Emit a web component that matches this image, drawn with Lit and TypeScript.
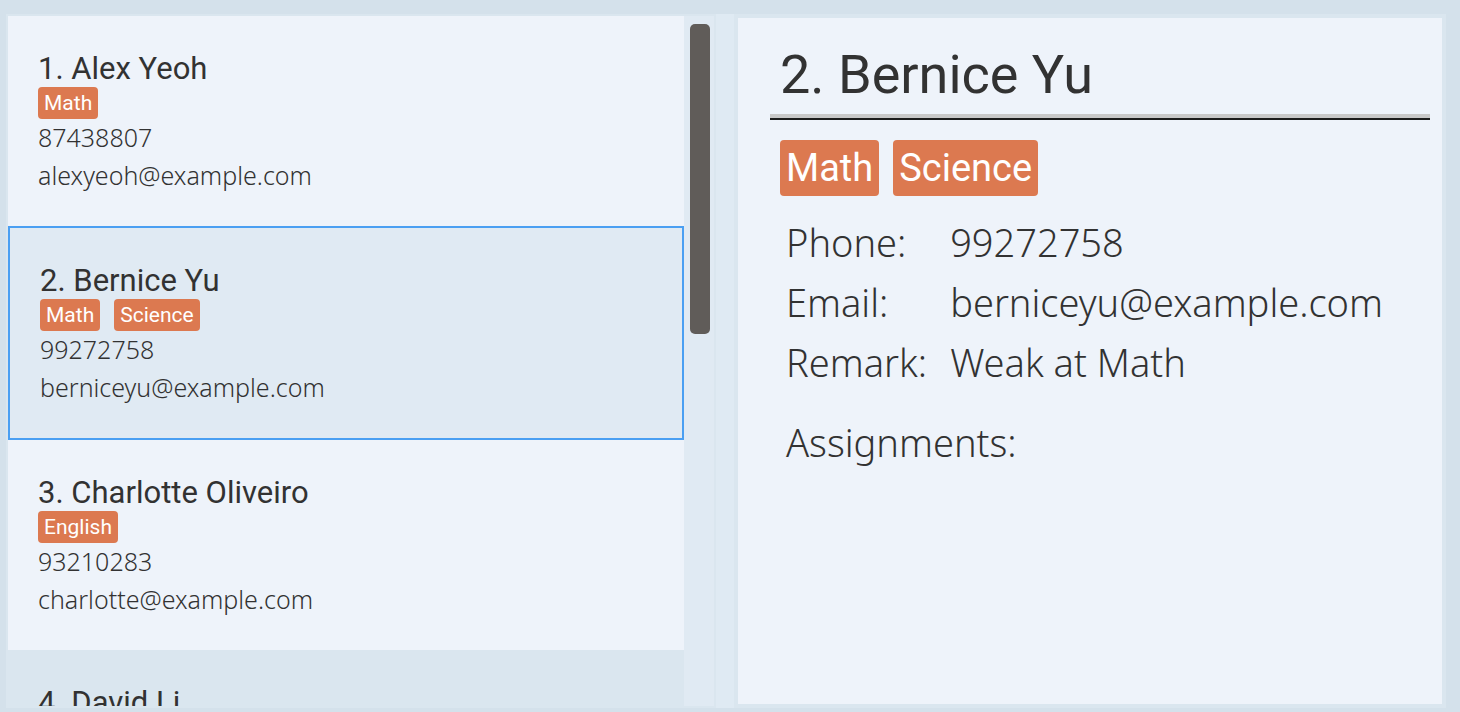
import { LitElement, html, css } from "lit";
import { customElement, property, state } from "lit/decorators.js";

interface Person {
  name: string;
  tags: string[];
  phone: string;
  email: string;
  remark: string;
}

const PEOPLE: Person[] = [
  { name: "Alex Yeoh", tags: ["Math"], phone: "87438807", email: "alexyeoh@example.com", remark: "" },
  { name: "Bernice Yu", tags: ["Math", "Science"], phone: "99272758", email: "berniceyu@example.com", remark: "Weak at Math" },
  { name: "Charlotte Oliveiro", tags: ["English"], phone: "93210283", email: "charlotte@example.com", remark: "" },
  { name: "David Li", tags: [], phone: "", email: "", remark: "" },
];

@customElement("tag-row")
export class TagRow extends LitElement {
  @property({ attribute: false }) tags: string[] = [];
  @property({ type: Boolean, reflect: true }) large = false;

  static styles = css`
    :host {
      display: flex;
      flex-wrap: wrap;
      gap: 14px;
    }
    .tag {
      padding: 0 6px;
      border-radius: 4px;
      background: #dc7950;
      color: #fff;
      font: 400 21px/32px Roboto, "Liberation Sans", sans-serif;
    }
    :host([large]) .tag {
      font-size: 38px;
      line-height: 56px;
    }
  `;

  render() {
    return this.tags.map((tag) => html`<span class="tag">${tag}</span>`);
  }
}

@customElement("person-list")
export class PersonList extends LitElement {
  @property({ attribute: false }) people: Person[] = [];
  @property({ type: Number }) selected = 0;

  static styles = css`
    :host {
      display: flex;
      min-width: 0;
      min-height: 0;
      border: 2px solid #dae6ef;
      background: #e0eaf3;
    }
    .rows {
      flex: 1;
      min-width: 0;
      margin: 0;
      padding: 0;
      list-style: none;
      overflow: hidden;
      color: #323232;
    }
    .row {
      padding: 34px 30px 32px;
      background: #eef3fa;
      cursor: default;
    }
    .row:nth-child(even) {
      background: #dae6ef;
    }
    .row.selected {
      border: 2px solid #4a9ff2;
      background: #e0eaf3;
    }
    .name {
      font: 400 31px/37px Roboto, "Liberation Sans", sans-serif;
      white-space: nowrap;
    }
    .lines {
      margin-top: -1px;
    }
    .line {
      font: 300 25px/38px "Noto Sans", "Open Sans", sans-serif;
    }
    .track {
      padding: 8px 4px 8px 6px;
    }
    .thumb {
      width: 20px;
      height: 46%;
      border-radius: 5px;
      background: #605c59;
    }
  `;

  private pick(index: number) {
    this.dispatchEvent(new CustomEvent("pick", { detail: index }));
  }

  render() {
    return html`
      <ul class="rows" role="listbox" aria-label="People">
        ${this.people.map(
          (p, i) => html`
            <li
              class=${i === this.selected ? "row selected" : "row"}
              role="option"
              aria-selected=${i === this.selected ? "true" : "false"}
              @click=${() => this.pick(i)}
            >
              <div class="name">${i + 1}. ${p.name}</div>
              <tag-row .tags=${p.tags}></tag-row>
              <div class="lines">
                <div class="line">${p.phone}</div>
                <div class="line">${p.email}</div>
              </div>
            </li>
          `
        )}
      </ul>
      <div class="track"><div class="thumb"></div></div>
    `;
  }
}

@customElement("person-detail")
export class PersonDetail extends LitElement {
  @property({ attribute: false }) person!: Person;
  @property({ type: Number }) number = 1;

  static styles = css`
    :host {
      display: block;
      box-sizing: border-box;
      min-width: 0;
      overflow: hidden;
      padding: 16px 12px 0 32px;
      border: 4px solid #dae6ef;
      background: #eef3fa;
      color: #323232;
    }
    .title {
      margin: 0;
      padding: 0 10px 2px;
      border-bottom: 2px solid #1c1c1c;
      box-shadow: inset 0 -4px #c8c8c8;
      font: 400 54px/82px Roboto, "Liberation Sans", sans-serif;
    }
    .tags {
      padding: 20px 10px 0;
    }
    .fields {
      display: grid;
      grid-template-columns: max-content 1fr;
      column-gap: 23px;
      margin: 0;
      padding: 16px 16px 0;
      font: 300 38px/60px "Noto Sans", "Open Sans", sans-serif;
    }
    .value {
      margin: 0;
    }
    .section {
      margin: 20px 0 0;
      padding: 0 16px;
      font: 300 38px/60px "Noto Sans", "Open Sans", sans-serif;
    }
  `;

  render() {
    const p = this.person;
    return html`
      <h1 class="title">${this.number}. ${p.name}</h1>
      <tag-row class="tags" large .tags=${p.tags}></tag-row>
      <dl class="fields">
        <dt>Phone:</dt>
        <dd class="value">${p.phone}</dd>
        <dt>Email:</dt>
        <dd class="value">${p.email}</dd>
        <dt>Remark:</dt>
        <dd class="value">${p.remark}</dd>
      </dl>
      <h2 class="section">Assignments:</h2>
    `;
  }
}

@customElement("app-root")
export class AppRoot extends LitElement {
  @state() private selected = 1;

  static styles = css`
    :host {
      display: grid;
      grid-template-columns: minmax(0, 355fr) 18px minmax(0, 356fr);
      grid-template-rows: minmax(0, 1fr);
      box-sizing: border-box;
      height: 100vh;
      padding: 14px 14px 4px 6px;
      background: #d4e1eb;
    }
    .divider {
      background: #dfeaf3;
    }
  `;

  render() {
    return html`
      <person-list
        .people=${PEOPLE}
        .selected=${this.selected}
        @pick=${(e: CustomEvent<number>) => (this.selected = e.detail)}
      ></person-list>
      <div class="divider"></div>
      <person-detail .person=${PEOPLE[this.selected]} .number=${this.selected + 1}></person-detail>
    `;
  }
}
